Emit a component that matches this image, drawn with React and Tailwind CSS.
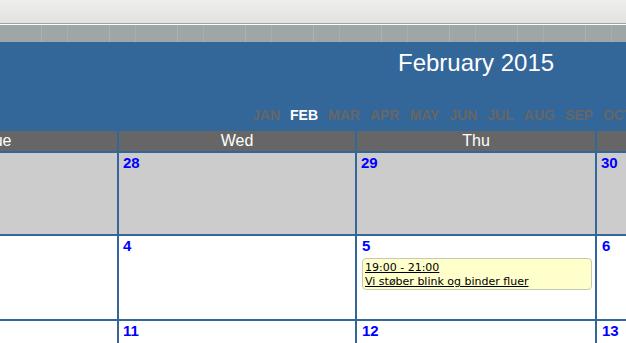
import React from "react";

const months = ["JAN", "FEB", "MAR", "APR", "MAY", "JUN", "JUL", "AUG", "SEP", "OCT"];

function Num({ n }) {
  return (
    <div className="pl-[4px] pt-[1px] text-[15px] leading-[17px] font-bold text-[#0000ff]">{n}</div>
  );
}

export default function App() {
  const arial = { fontFamily: '"Liberation Sans", Arial, sans-serif' };
  return (
    <div className="w-[626px] h-[343px] overflow-hidden bg-white" style={arial}>
      <div className="h-[23px] bg-gradient-to-b from-[#eeeeec] to-[#e2e2e0]" />
      <div className="h-px bg-[#a4a4a4]" />
      <div className="h-px bg-white" />
      <div className="h-[17px] bg-[#9ea6a8] bg-[repeating-linear-gradient(90deg,transparent_0px,transparent_41px,rgba(255,255,255,0.14)_41px,rgba(255,255,255,0.14)_42px,transparent_42px,transparent_67px,rgba(255,255,255,0.1)_67px,rgba(255,255,255,0.1)_68px)]" />
      <div className="h-[89px] bg-[#336699] pt-[7px]">
        <div className="pl-[398px] text-[24px] leading-[28px] text-white">February 2015</div>
        <div className="mt-[30px] flex gap-[10px] pl-[252px] text-[14px] leading-[16px] font-bold whitespace-nowrap">
          {months.map((m) => (
            <span key={m} className={m === "FEB" ? "text-white" : "text-[#666666]"}>{m}</span>
          ))}
        </div>
      </div>
      <div className="bg-[#336699] -ml-[121px] w-[960px] flex flex-col gap-[2px]">
        <div className="grid grid-cols-[238px_236px_238px_238px] gap-[2px] h-[20px]">
          {["Tue", "Wed", "Thu", "Fri"].map((d) => (
            <div key={d} className="bg-[#666666] text-white text-center text-[16px] leading-[20px]">{d}</div>
          ))}
        </div>
        <div className="grid grid-cols-[238px_236px_238px_238px] gap-[2px] h-[81px]">
          {[27, 28, 29, 30].map((n) => (
            <div key={n} className="bg-[#cccccc]"><Num n={n} /></div>
          ))}
        </div>
        <div className="grid grid-cols-[238px_236px_238px_238px] gap-[2px] h-[83px]">
          <div className="bg-white"><Num n={3} /></div>
          <div className="bg-white"><Num n={4} /></div>
          <div className="bg-white pl-[1px]">
            <Num n={5} />
            <div
              className="mt-[4px] ml-[4px] mr-[3px] rounded-[4px] border border-[#c9c9b0] bg-[#ffffcc] pl-[2px] pt-[2px] text-[11px] leading-[14px] text-black"
              style={{ fontFamily: '"DejaVu Sans", Verdana, sans-serif' }}
            >
              <div className="underline">19:00 - 21:00</div>
              <div className="underline">Vi støber blink og binder fluer</div>
            </div>
          </div>
          <div className="bg-white pl-[1px]"><Num n={6} /></div>
        </div>
        <div className="grid grid-cols-[238px_236px_238px_238px] gap-[2px] h-[83px]">
          <div className="bg-white"><Num n={10} /></div>
          <div className="bg-white"><Num n={11} /></div>
          <div className="bg-white pl-[1px]"><Num n={12} /></div>
          <div className="bg-white pl-[1px]"><Num n={13} /></div>
        </div>
      </div>
    </div>
  );
}
